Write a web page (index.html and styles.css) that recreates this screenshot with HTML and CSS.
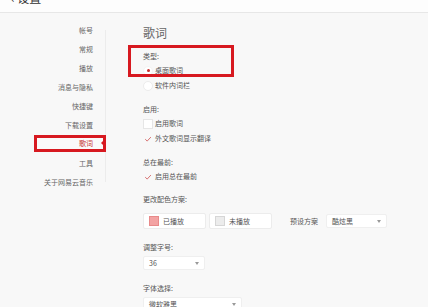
FILE: index.html
```html
<!DOCTYPE html>
<html lang="zh">
<head>
<meta charset="utf-8">
<title>设置 - 歌词</title>
<link rel="stylesheet" href="styles.css">
</head>
<body>
<div class="app">
  <header class="topbar"><span class="back">‹ 设置</span></header>
  <div class="main">
    <nav class="side">
      <a class="nav-item">帐号</a>
      <a class="nav-item">常规</a>
      <a class="nav-item">播放</a>
      <a class="nav-item">消息与隐私</a>
      <a class="nav-item">快捷键</a>
      <a class="nav-item">下载设置</a>
      <a class="nav-item active">歌词</a>
      <a class="nav-item">工具</a>
      <a class="nav-item">关于网易云音乐</a>
    </nav>
    <section class="content">
      <h1 class="title">歌词</h1>

      <div class="group g-type">
        <div class="label">类型:</div>
        <div class="opt"><span class="radio on"></span>桌面歌词</div>
        <div class="opt"><span class="radio"></span>软件内词栏</div>
      </div>
      <div class="annot"></div>

      <div class="group g-enable">
        <div class="label">启用:</div>
        <div class="opt"><span class="check"></span>启用歌词</div>
        <div class="opt"><span class="check on"><svg viewBox="0 0 10 10"><polyline points="1.5,5.2 4,7.6 8.6,2.6"/></svg></span>外文歌词显示翻译</div>
      </div>

      <div class="group g-top">
        <div class="label">总在最前:</div>
        <div class="opt"><span class="check on"><svg viewBox="0 0 10 10"><polyline points="1.5,5.2 4,7.6 8.6,2.6"/></svg></span>启用总在最前</div>
      </div>

      <div class="group g-color">
        <div class="label">更改配色方案:</div>
        <div class="palette">
          <div class="pbtn"><span class="swatch played"></span>已播放</div>
          <div class="pbtn"><span class="swatch unplayed"></span>未播放</div>
          <span class="preset-label">预设方案</span>
          <div class="select sel-preset"><span>酷炫黑</span><i class="caret"></i></div>
        </div>
      </div>

      <div class="group g-size">
        <div class="label">调整字号:</div>
        <div class="select sel-size"><span>36</span><i class="caret"></i></div>
      </div>

      <div class="group g-font">
        <div class="label">字体选择:</div>
        <div class="select sel-font"><span>微软雅黑</span><i class="caret"></i></div>
      </div>
    </section>
  </div>
</div>
</body>
</html>
```
FILE: styles.css
```css
html, body {
  margin: 0;
  padding: 0;
}
body {
  width: 428px;
  height: 307px;
  overflow: hidden;
  background: #f8f8f8;
  font-family: "Noto Sans CJK SC", "Noto Sans", sans-serif;
  font-size: 7px;
  color: #555;
}
.app {
  display: flex;
  flex-direction: column;
  height: 307px;
  overflow: hidden;
}
.topbar {
  flex-shrink: 0;
  height: 12px;
  background: #fdfdfd;
  border-bottom: 1px solid #e7e7e7;
  overflow: hidden;
  padding-left: 11px;
}
.back {
  display: block;
  font-size: 12px;
  line-height: 12px;
  margin-top: -8px;
  color: #333;
}
.main {
  display: flex;
  flex: 1;
  min-height: 0;
}
.side {
  position: relative;
  width: 106px;
  padding-top: 8px;
  display: flex;
  flex-direction: column;
  flex-shrink: 0;
}
.side::before {
  content: "";
  position: absolute;
  left: 105px;
  top: 17px;
  width: 1px;
  height: 152px;
  background: #ececec;
}
.nav-item {
  display: block;
  height: 19px;
  line-height: 19px;
  text-align: right;
  padding-right: 13px;
  color: #666;
  white-space: nowrap;
}
.nav-item.active {
  position: relative;
  box-sizing: border-box;
  margin-left: 34px;
  height: 17px;
  line-height: 11px;
  margin-bottom: 2px;
  border: 3px solid #d71920;
  padding-right: 10px;
  color: #c62f2f;
  background: #fafafa;
}
.nav-item.active::after {
  content: "";
  position: absolute;
  right: 0;
  top: 3px;
  border-right: 2px solid #d71920;
  border-top: 2px solid transparent;
  border-bottom: 2px solid transparent;
}
.content {
  position: relative;
  flex: 1;
  padding-left: 37px;
  padding-top: 11px;
}
.title {
  margin: 2px 0 0 0;
  font-size: 12px;
  line-height: 14px;
  font-weight: normal;
  color: #666;
}
.label {
  line-height: 14px;
  height: 14px;
  color: #555;
}
.opt {
  display: flex;
  align-items: center;
  height: 15px;
  line-height: 15px;
}
.radio, .check {
  box-sizing: border-box;
  width: 10px;
  height: 10px;
  margin-right: 2px;
  flex-shrink: 0;
  display: flex;
  align-items: center;
  justify-content: center;
}
.radio {
  border-radius: 50%;
  border: 1px solid #ececec;
  background: #fff;
}
.radio.on {
  border-color: #f4f4f4;
}
.radio.on::after {
  content: "";
  width: 3px;
  height: 3px;
  border-radius: 50%;
  background: #c62f2f;
}
.check {
  border: 1px solid #e6e6e6;
  background: #fff;
}
.check.on {
  border-color: transparent;
  background: transparent;
}
.check svg {
  width: 10px;
  height: 10px;
  fill: none;
  stroke: #c83c3c;
  stroke-width: 0.9;
}
.group {
  margin-top: 9px;
}
.g-type {
  margin-top: 9px;
}
.annot {
  position: absolute;
  left: 22px;
  top: 32px;
  width: 106px;
  height: 32px;
  box-sizing: border-box;
  border: 3px solid #d71920;
}
.g-color {
  margin-top: 8px;
}
.palette {
  display: flex;
  align-items: center;
  margin-top: 7px;
}
.pbtn {
  box-sizing: border-box;
  width: 63px;
  height: 16px;
  display: flex;
  align-items: center;
  padding-left: 5px;
  background: #fff;
  border: 1px solid #ececec;
  border-radius: 2px;
  margin-right: 3px;
}
.swatch {
  box-sizing: border-box;
  width: 10px;
  height: 10px;
  margin-right: 4px;
}
.swatch.played {
  background: #f3a3a3;
  border: 1px solid #e88a8a;
}
.swatch.unplayed {
  background: #ececec;
  border: 1px solid #d6d6d6;
}
.preset-label {
  margin-left: 15px;
  color: #555;
}
.select {
  box-sizing: border-box;
  height: 14px;
  flex-shrink: 0;
  display: flex;
  align-items: center;
  justify-content: space-between;
  padding: 0 5px 0 5px;
  background: #fff;
  border: 1px solid #efefef;
  border-radius: 2px;
  color: #555;
}
.sel-preset {
  width: 61px;
  margin-left: 8px;
}
.sel-size {
  width: 62px;
  margin-top: 2px;
}
.sel-font {
  width: 99px;
  margin-top: 2px;
}
.caret {
  width: 0;
  height: 0;
  border-left: 2.5px solid transparent;
  border-right: 2.5px solid transparent;
  border-top: 3px solid #999;
}
.g-size {
  margin-top: 11px;
}
.g-font {
  margin-top: 11px;
}
```
